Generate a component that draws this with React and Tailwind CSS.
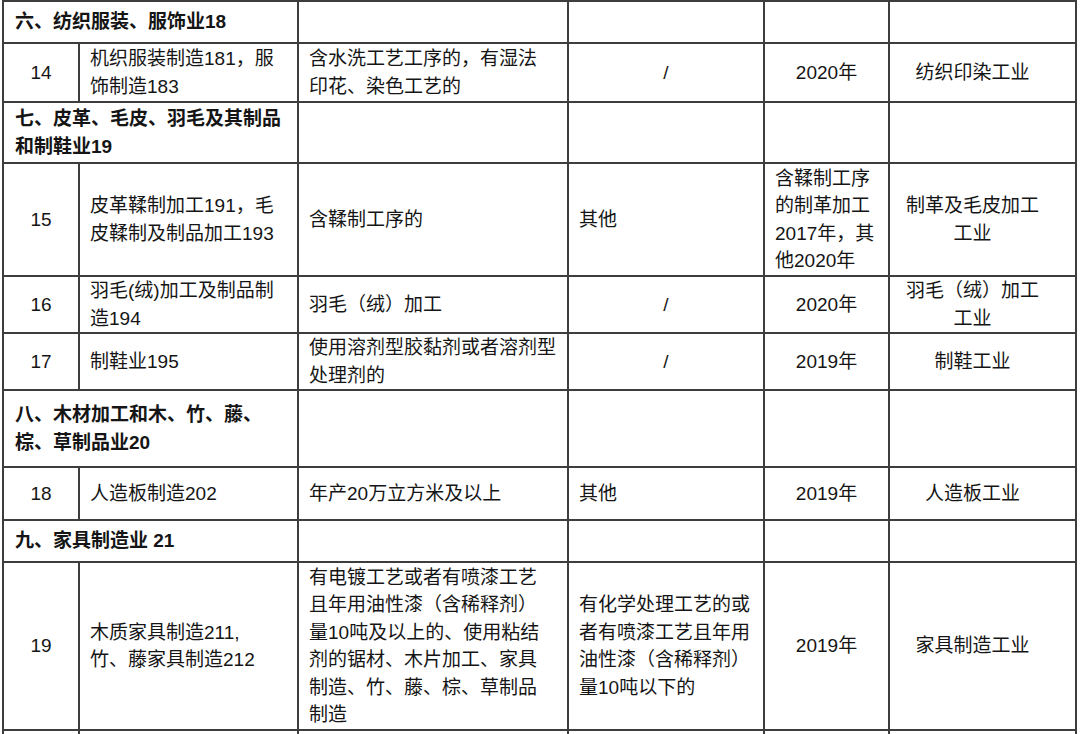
import React from "react";

const COLS = "grid grid-cols-[76px_219px_270px_196px_125px_187px]";
const CELL = "border-r-2 border-b-2 border-[#3d3d3d] flex items-center";
const L = CELL + " justify-start text-left px-[10px]";
const C = CELL + " justify-center text-center px-[6px]";
const R = CELL + " justify-center text-center pl-[6px] pr-[26px]";

function Lines({ lines }) {
  return (
    <div className="flex flex-col">
      {lines.map((t, i) => (
        <div key={i} className="whitespace-nowrap">
          {t}
        </div>
      ))}
    </div>
  );
}

function HeaderRow({ h, lines }) {
  return (
    <div className={COLS + " " + h}>
      <div className={CELL + " col-span-2 pl-[11px] font-bold"}>
        <Lines lines={lines} />
      </div>
      <div className={CELL}></div>
      <div className={CELL}></div>
      <div className={CELL}></div>
      <div className={CELL}></div>
    </div>
  );
}

function DataRow({ h, no, name, cond, other, otherLeft, year, yearLeft, ind }) {
  return (
    <div className={COLS + " " + h}>
      <div className={C}>{no}</div>
      <div className={L}>
        <Lines lines={name} />
      </div>
      <div className={L}>
        <Lines lines={cond} />
      </div>
      <div className={otherLeft ? L : C}>
        <Lines lines={other} />
      </div>
      <div className={yearLeft ? L : C}>
        <Lines lines={year} />
      </div>
      <div className={R}>
        <div className="flex flex-col items-center">
          {ind.map((t, i) => (
            <div key={i} className="whitespace-nowrap">
              {t}
            </div>
          ))}
        </div>
      </div>
    </div>
  );
}

export default function App() {
  return (
    <div
      className="w-[1080px] h-[734px] overflow-hidden bg-white text-[#151515] text-[19px] leading-[27.5px]"
      style={{ fontFamily: '"Liberation Sans", "Noto Sans CJK SC", sans-serif' }}
    >
      <div className="ml-[2px] w-fit border-l-2 border-t-2 border-[#3d3d3d]">
        <HeaderRow h="h-[42px]" lines={["六、纺织服装、服饰业18"]} />
        <DataRow
          h="h-[59px]"
          no="14"
          name={["机织服装制造181，服", "饰制造183"]}
          cond={["含水洗工艺工序的，有湿法", "印花、染色工艺的"]}
          other={["/"]}
          year={["2020年"]}
          ind={["纺织印染工业"]}
        />
        <HeaderRow h="h-[61px]" lines={["七、皮革、毛皮、羽毛及其制品", "和制鞋业19"]} />
        <DataRow
          h="h-[113px]"
          no="15"
          name={["皮革鞣制加工191，毛", "皮鞣制及制品加工193"]}
          cond={["含鞣制工序的"]}
          other={["其他"]}
          otherLeft
          year={["含鞣制工序", "的制革加工", "2017年，其", "他2020年"]}
          yearLeft
          ind={["制革及毛皮加工", "工业"]}
        />
        <DataRow
          h="h-[57px]"
          no="16"
          name={["羽毛(绒)加工及制品制", "造194"]}
          cond={["羽毛（绒）加工"]}
          other={["/"]}
          year={["2020年"]}
          ind={["羽毛（绒）加工", "工业"]}
        />
        <DataRow
          h="h-[57px]"
          no="17"
          name={["制鞋业195"]}
          cond={["使用溶剂型胶黏剂或者溶剂型", "处理剂的"]}
          other={["/"]}
          year={["2019年"]}
          ind={["制鞋工业"]}
        />
        <HeaderRow h="h-[77px]" lines={["八、木材加工和木、竹、藤、", "棕、草制品业20"]} />
        <DataRow
          h="h-[53px]"
          no="18"
          name={["人造板制造202"]}
          cond={["年产20万立方米及以上"]}
          other={["其他"]}
          otherLeft
          year={["2019年"]}
          ind={["人造板工业"]}
        />
        <HeaderRow h="h-[42px]" lines={["九、家具制造业 21"]} />
        <DataRow
          h="h-[168px]"
          no="19"
          name={["木质家具制造211,", "竹、藤家具制造212"]}
          cond={[
            "有电镀工艺或者有喷漆工艺",
            "且年用油性漆（含稀释剂）",
            "量10吨及以上的、使用粘结",
            "剂的锯材、木片加工、家具",
            "制造、竹、藤、棕、草制品",
            "制造",
          ]}
          other={["有化学处理工艺的或", "者有喷漆工艺且年用", "油性漆（含稀释剂）", "量10吨以下的"]}
          otherLeft
          year={["2019年"]}
          ind={["家具制造工业"]}
        />
        <div className={COLS + " h-[40px]"}>
          <div className={CELL}></div>
          <div className={CELL}></div>
          <div className={CELL}></div>
          <div className={CELL}></div>
          <div className={CELL}></div>
          <div className={CELL}></div>
        </div>
      </div>
    </div>
  );
}
